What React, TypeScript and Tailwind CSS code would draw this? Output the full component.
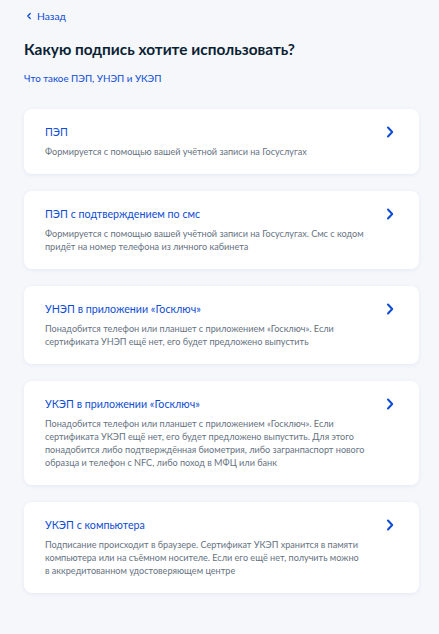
import { ChevronLeft } from "lucide-react";

const options = [
  {
    title: "ПЭП",
    text: "Формируется с помощью вашей учётной записи на Госуслугах",
  },
  {
    title: "ПЭП с подтверждением по смс",
    text: "Формируется с помощью вашей учётной записи на Госуслугах. Смс с кодом придёт на номер телефона из личного кабинета",
  },
  {
    title: "УНЭП в приложении «Госключ»",
    text: "Понадобится телефон или планшет с приложением «Госключ». Если сертификата УНЭП ещё нет, его будет предложено выпустить",
  },
  {
    title: "УКЭП в приложении «Госключ»",
    text: "Понадобится телефон или планшет с приложением «Госключ». Если сертификата УКЭП ещё нет, его будет предложено выпустить. Для этого понадобится либо подтверждённая биометрия, либо загранпаспорт нового образца и телефон с NFC, либо поход в МФЦ или банк",
  },
  {
    title: "УКЭП с компьютера",
    text: "Подписание происходит в браузере. Сертификат УКЭП хранится в памяти компьютера или на съёмном носителе. Если его ещё нет, получить можно в\u00a0аккредитованном удостоверяющем центре",
  },
];

function Chevron() {
  return (
    <svg width="8" height="12" viewBox="0 0 8 12" fill="none" className="shrink-0">
      <path d="M2 1.5 L6.2 6 L2 10.5" stroke="#0d4cd3" strokeWidth="2" strokeLinecap="round" strokeLinejoin="round" />
    </svg>
  );
}

export default function App() {
  return (
    <div
      className="min-h-[634px] bg-[#f5f7fb] pl-[24px] pr-[20px] pt-[9px] pb-[30px]"
      style={{ fontFamily: "Lato, 'Noto Sans', sans-serif" }}
    >
      <a className="flex items-center gap-[3px] text-[10.3px] leading-[14px] text-[#0d4cd3]">
        <ChevronLeft className="w-[10px] h-[10px]" strokeWidth={3} />
        <span>Назад</span>
      </a>

      <h1 className="mt-[15px] text-[15.4px] leading-[22px] font-bold text-[#0b1f33]">
        Какую подпись хотите использовать?
      </h1>

      <a className="block mt-[11px] text-[9.8px] leading-[14px] text-[#0d4cd3]">
        Что такое ПЭП, УНЭП и УКЭП
      </a>

      <div className="mt-[24px] flex flex-col gap-[17px]">
        {options.map((o) => (
          <div
            key={o.title}
            className="rounded-[8px] bg-white pl-[21px] pr-[25px] pt-[15px] pb-[16px] flex items-start shadow-[0_1px_4px_rgba(40,70,140,0.08)]"
          >
            <div className="flex-1 pr-[12px]">
              <div className="text-[10.7px] leading-[16px] text-[#0d4cd3]">{o.title}</div>
              <div className="mt-[5px] text-[9.1px] leading-[13px] text-[#66727f]">{o.text}</div>
            </div>
            <div className="pt-[2px]">
              <Chevron />
            </div>
          </div>
        ))}
      </div>
    </div>
  );
}
